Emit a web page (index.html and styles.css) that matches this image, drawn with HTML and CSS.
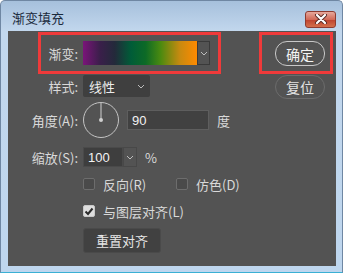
FILE: index.html
```html
<!DOCTYPE html>
<html lang="zh">
<head>
    <meta charset="UTF-8">
    <title>渐变填充</title>
    <link rel="stylesheet" href="styles.css">
</head>
<body>
    <div class="window">
        <div class="titlebar">
            <span class="title">渐变填充</span>
            <div class="close">
                <svg width="16" height="10" viewBox="0 0 16 10">
                    <path d="M4 1 L12 9 M12 1 L4 9" stroke="#5a2a24" stroke-width="4" stroke-linecap="round"/>
                    <path d="M4 1 L12 9 M12 1 L4 9" stroke="#ffffff" stroke-width="2.2" stroke-linecap="round"/>
                </svg>
            </div>
        </div>
        <div class="content">
            <div class="form">
                <div class="row row-gradient">
                    <span class="lbl">渐变:</span>
                    <div class="picker">
                        <div class="swatch"></div>
                        <div class="drop">
                            <svg width="8" height="5" viewBox="0 0 8 5"><path d="M1 1 L4 4 L7 1" fill="none" stroke="#bdbdbd" stroke-width="1"/></svg>
                        </div>
                    </div>
                </div>
                <div class="row row-style">
                    <span class="lbl">样式:</span>
                    <div class="select">
                        <span>线性</span>
                        <svg width="8" height="5" viewBox="0 0 8 5"><path d="M1 1 L4 4 L7 1" fill="none" stroke="#bdbdbd" stroke-width="1"/></svg>
                    </div>
                </div>
                <div class="row row-angle">
                    <span class="lbl">角度(A):</span>
                    <svg class="dial" width="36" height="36" viewBox="0 0 36 36">
                        <circle cx="18" cy="18" r="17.5" fill="none" stroke="#c4c4c4" stroke-width="1"/>
                        <line x1="18" y1="1" x2="18" y2="18" stroke="#d0d0d0" stroke-width="1"/>
                        <circle cx="18" cy="18" r="2" fill="#d0d0d0"/>
                    </svg>
                    <div class="field field-angle">90</div>
                    <span class="unit">度</span>
                </div>
                <div class="row row-scale">
                    <span class="lbl">缩放(S):</span>
                    <div class="combo">
                        <div class="field field-scale">100</div>
                        <div class="drop">
                            <svg width="8" height="5" viewBox="0 0 8 5"><path d="M1 1 L4 4 L7 1" fill="none" stroke="#bdbdbd" stroke-width="1"/></svg>
                        </div>
                    </div>
                    <span class="unit">%</span>
                </div>
                <div class="checks">
                    <label class="check check-first"><span class="box"></span>反向(R)</label>
                    <label class="check"><span class="box"></span>仿色(D)</label>
                </div>
                <div class="checks checks-align">
                    <label class="check">
                        <span class="box box-on">
                            <svg width="10" height="9" viewBox="0 0 10 9"><path d="M1.5 4.5 L4 7 L8.5 1.5" fill="none" stroke="#2a2a2a" stroke-width="2"/></svg>
                        </span>与图层对齐(L)
                    </label>
                </div>
                <div class="btn-reset">重置对齐</div>
            </div>
            <div class="side">
                <div class="btn btn-ok">确定</div>
                <div class="btn btn-resetpos">复位</div>
            </div>
            <div class="mark mark-left"></div>
            <div class="mark mark-right"></div>
        </div>
    </div>
</body>
</html>
```

FILE: styles.css
```css
body {
    margin: 0;
    font-family: "Noto Sans CJK SC", "Noto Sans", sans-serif;
}

.window {
    width: 343px;
    height: 273px;
    box-sizing: border-box;
    border: 1px solid #6f87a3;
    border-bottom-color: #3ab0d4;
    border-radius: 5px 5px 0 0;
    background: linear-gradient(#a6c0dc, #c2d7ed 30px, #bed6ee);
    padding: 0 6px 6px 7px;
    display: flex;
    flex-direction: column;
}

.titlebar {
    height: 30px;
    display: flex;
    align-items: center;
    justify-content: space-between;
}

.title {
    font-size: 13px;
    color: #1b2a3c;
    margin-left: 4px;
    margin-top: 3px;
}

.close {
    width: 31px;
    height: 17px;
    box-sizing: border-box;
    border: 1px solid #8e3b30;
    border-radius: 3px;
    background: linear-gradient(#e6a89c, #d26a58 50%, #c04530 55%, #d3704c);
    display: flex;
    align-items: center;
    justify-content: center;
    margin-top: 6px;
}

.content {
    position: relative;
    flex: 1;
    background: #535353;
    display: flex;
    padding-top: 10px;
    color: #d9d9d9;
    font-size: 13px;
}

.form {
    display: flex;
    flex-direction: column;
}

.row {
    display: flex;
    align-items: center;
}

.lbl {
    width: 70px;
    margin-right: 5px;
    text-align: right;
    white-space: nowrap;
}

.row-style {
    margin-top: 10px;
}

.row-angle {
    margin-top: 5px;
}

.row-scale {
    margin-top: 9px;
}

.picker {
    display: flex;
    height: 24px;
}

.swatch {
    width: 114px;
    background: linear-gradient(to right, #7a1479, #3a1f4a 15%, #232a3a 28%, #005c38 42%, #0d6a26 55%, #4a8a10 68%, #c88a10 85%, #ff8a00);
}

.drop {
    width: 13px;
    box-sizing: border-box;
    border: 1px solid #3a3a3a;
    background: #535353;
    display: flex;
    align-items: center;
    justify-content: center;
}

.select {
    width: 67px;
    height: 22px;
    box-sizing: border-box;
    background: #3f3f3f;
    border-radius: 2px;
    display: flex;
    align-items: center;
    justify-content: space-between;
    padding: 0 5px 0 6px;
    color: #ececec;
}

.dial {
    display: block;
}

.field {
    height: 20px;
    box-sizing: border-box;
    background: #414141;
    border: 1px solid #3a3a3a;
    font-family: "Liberation Sans", Arial, sans-serif;
    font-size: 13px;
    color: #f2f2f2;
    display: flex;
    align-items: center;
    padding-left: 4px;
}

.field-angle {
    width: 82px;
    margin-left: 8px;
    border-color: #5e5e5e;
}

.unit {
    margin-left: 8px;
}

.combo {
    display: flex;
    height: 20px;
}

.field-scale {
    width: 40px;
    background: #3e3e3e;
    border-color: #4a4a4a;
}

.combo .drop {
    width: 14px;
    height: 20px;
    border-color: #484848;
}

.checks {
    display: flex;
    margin-top: 9px;
    margin-left: 75px;
    height: 16px;
}

.checks-align {
    margin-top: 11px;
}

.check {
    display: flex;
    align-items: center;
    white-space: nowrap;
}

.check-first {
    width: 93px;
}

.box {
    width: 12px;
    height: 12px;
    box-sizing: border-box;
    border: 1px solid #6d6d6d;
    border-radius: 2px;
    background: #4a4a4a;
    margin-right: 8px;
    display: flex;
    align-items: center;
    justify-content: center;
}

.box-on {
    background: #dedede;
    border-color: #c8c8c8;
}

.btn-reset {
    margin-top: 9px;
    margin-left: 75px;
    width: 78px;
    height: 25px;
    box-sizing: border-box;
    background: #414141;
    border: 1px solid #4a4a4a;
    border-radius: 3px;
    display: flex;
    align-items: center;
    justify-content: center;
    color: #e6e6e6;
}

.side {
    margin-left: auto;
    margin-right: 11px;
    display: flex;
    flex-direction: column;
    gap: 9px;
}

.btn {
    width: 50px;
    box-sizing: border-box;
    border-radius: 12px;
    display: flex;
    align-items: center;
    justify-content: center;
    font-size: 14px;
}

.btn-ok {
    height: 25px;
    border: 1.5px solid #c8c8c8;
    color: #f4f4f4;
}

.btn-resetpos {
    height: 24px;
    border: 1px solid #6c6c6c;
    color: #e2e2e2;
}

.mark {
    position: absolute;
    top: 1px;
    height: 42px;
    box-sizing: border-box;
    border: 3px solid #ef3a3a;
}

.mark-left {
    left: 30px;
    width: 183px;
}

.mark-right {
    left: 251px;
    width: 74px;
}
```
